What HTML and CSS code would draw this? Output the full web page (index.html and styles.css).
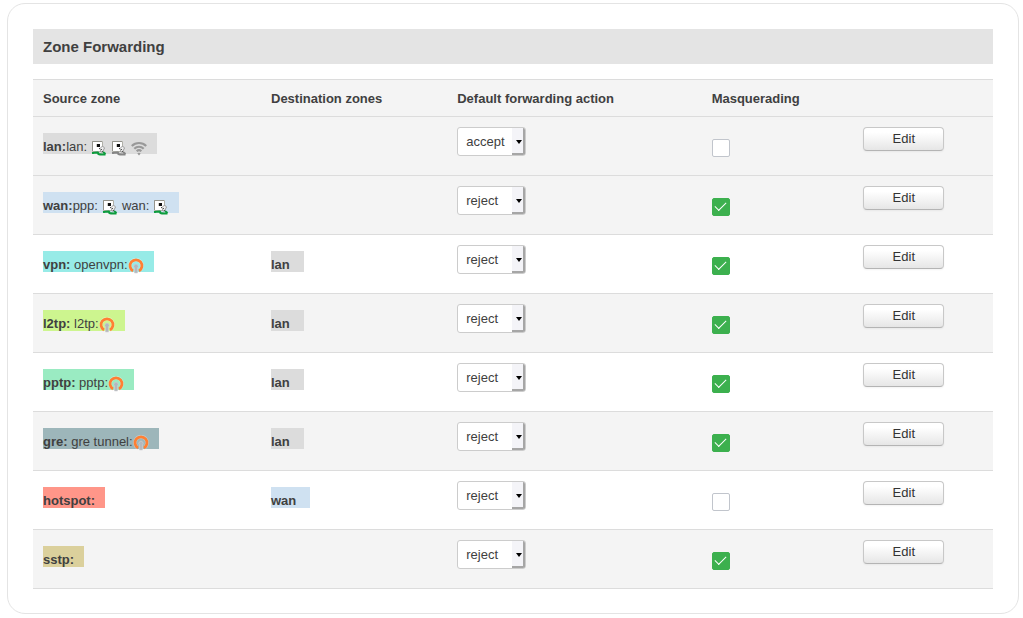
FILE: index.html
```html
<!DOCTYPE html>
<html lang="en">
<head>
<meta charset="utf-8">
<meta name="viewport" content="width=device-width, initial-scale=1">
<title>Zone Forwarding</title>
<link rel="stylesheet" href="styles.css">
</head>
<body>
<svg class="sprite" aria-hidden="true">
  <symbol id="port" viewBox="0 0 16 16">
    <path d="M1.500 1.500h10v10h-10z" fill="#fff" stroke="#b0b0a8"/>
    <path d="M1.500 11V1.500H11" fill="none" stroke="#94948c"/>
    <path d="M5 4h4v3H5z" fill="#d0d0c8"/>
    <path d="M6 4h3v3H6z" fill="#111"/>
    <path d="M1 13c2.500-.2 4-.6 6-.5 1 .6-.5 1 .5 1.500 1.500.8 4 .5 7 .5" fill="none" stroke="currentColor" stroke-width="2"/>
    <path d="M12 12l2.500 2" fill="none" stroke="currentColor" stroke-width="2"/>
    <path d="M9 8.500L11.500 6l2 2-2 4H10z" fill="#eee" stroke="#888" stroke-width=".8"/>
    <path d="M8 8h1v1H8zM10 9h1v1h-1zM11 11h1v1h-1z" fill="#555"/>
  </symbol>
  <symbol id="wifi" viewBox="0 0 16 16">
    <path d="M.8 6a10.200 10.200 0 0 1 14.400 0M3.300 8.700a6.700 6.700 0 0 1 9.400 0M5.700 11.300a3.300 3.300 0 0 1 4.600 0" fill="none" stroke="#999" stroke-width="2.200"/>
    <path d="M6.300 13.500q1.700-1.600 3.400 0L8 15.500z" fill="#999"/>
  </symbol>
  <symbol id="tunnel" viewBox="0 0 16 16">
    <path d="M4.600 12.700a6 6 0 1 1 6.800 0" fill="none" stroke="#fff" stroke-opacity=".3" stroke-width="3.800"/>
    <path d="M5 13a6 6 0 1 1 6 0" fill="none" stroke="#ff7f33" stroke-width="2.800"/>
    <path d="M6.500 15v-5a2.200 2.200 0 1 1 3 0v5z" fill="#b4b8be" stroke="#d0d0d4" stroke-width=".6"/>
  </symbol>
</svg>
<main class="panel">
  <h1 class="title">Zone Forwarding</h1>
  <table class="zones">
    <colgroup><col class="col-source"><col class="col-dest"><col class="col-action"><col class="col-masq"><col></colgroup>
    <thead>
      <tr><th scope="col">Source zone</th><th scope="col">Destination zones</th><th scope="col">Default forwarding action</th><th scope="col">Masquerading</th><td></td></tr>
    </thead>
    <tbody>
      <tr>
        <td class="zone-cell"><span class="zone gray"><span><b>lan:</b>lan:</span><svg class="icon gap on"><use href="#port"/></svg><svg class="icon gap off"><use href="#port"/></svg><svg class="icon gap"><use href="#wifi"/></svg></span></td>
        <td class="zone-cell"></td>
        <td><span class="picker"><select aria-label="lan forwarding action"><option>accept</option><option>reject</option></select></span></td>
        <td class="check-cell"><input type="checkbox" aria-label="lan masquerading"></td>
        <td><button type="button">Edit</button></td>
      </tr>
      <tr>
        <td class="zone-cell"><span class="zone blue"><span><b>wan:</b>ppp:</span><svg class="icon gap on"><use href="#port"/></svg><span class="gap">wan:</span><svg class="icon gap on"><use href="#port"/></svg></span></td>
        <td class="zone-cell"></td>
        <td><span class="picker"><select aria-label="wan forwarding action"><option>reject</option><option>accept</option></select></span></td>
        <td class="check-cell"><input type="checkbox" aria-label="wan masquerading" checked></td>
        <td><button type="button">Edit</button></td>
      </tr>
      <tr>
        <td class="zone-cell"><span class="zone cyan"><span><b>vpn:</b> openvpn:</span><svg class="icon"><use href="#tunnel"/></svg></span></td>
        <td class="zone-cell"><span class="zone gray wide"><b>lan</b></span></td>
        <td><span class="picker"><select aria-label="vpn forwarding action"><option>reject</option><option>accept</option></select></span></td>
        <td class="check-cell"><input type="checkbox" aria-label="vpn masquerading" checked></td>
        <td><button type="button">Edit</button></td>
      </tr>
      <tr>
        <td class="zone-cell"><span class="zone lime"><span><b>l2tp:</b> l2tp:</span><svg class="icon"><use href="#tunnel"/></svg></span></td>
        <td class="zone-cell"><span class="zone gray wide"><b>lan</b></span></td>
        <td><span class="picker"><select aria-label="l2tp forwarding action"><option>reject</option><option>accept</option></select></span></td>
        <td class="check-cell"><input type="checkbox" aria-label="l2tp masquerading" checked></td>
        <td><button type="button">Edit</button></td>
      </tr>
      <tr>
        <td class="zone-cell"><span class="zone mint"><span><b>pptp:</b> pptp:</span><svg class="icon"><use href="#tunnel"/></svg></span></td>
        <td class="zone-cell"><span class="zone gray wide"><b>lan</b></span></td>
        <td><span class="picker"><select aria-label="pptp forwarding action"><option>reject</option><option>accept</option></select></span></td>
        <td class="check-cell"><input type="checkbox" aria-label="pptp masquerading" checked></td>
        <td><button type="button">Edit</button></td>
      </tr>
      <tr>
        <td class="zone-cell"><span class="zone slate"><span><b>gre:</b> gre tunnel:</span><svg class="icon"><use href="#tunnel"/></svg></span></td>
        <td class="zone-cell"><span class="zone gray wide"><b>lan</b></span></td>
        <td><span class="picker"><select aria-label="gre forwarding action"><option>reject</option><option>accept</option></select></span></td>
        <td class="check-cell"><input type="checkbox" aria-label="gre masquerading" checked></td>
        <td><button type="button">Edit</button></td>
      </tr>
      <tr>
        <td class="zone-cell"><span class="zone red"><b>hotspot:</b></span></td>
        <td class="zone-cell"><span class="zone blue wide"><b>wan</b></span></td>
        <td><span class="picker"><select aria-label="hotspot forwarding action"><option>reject</option><option>accept</option></select></span></td>
        <td class="check-cell"><input type="checkbox" aria-label="hotspot masquerading"></td>
        <td><button type="button">Edit</button></td>
      </tr>
      <tr>
        <td class="zone-cell"><span class="zone sand"><b>sstp:</b></span></td>
        <td class="zone-cell"></td>
        <td><span class="picker"><select aria-label="sstp forwarding action"><option>reject</option><option>accept</option></select></span></td>
        <td class="check-cell"><input type="checkbox" aria-label="sstp masquerading" checked></td>
        <td><button type="button">Edit</button></td>
      </tr>
    </tbody>
  </table>
</main>
</body>
</html>
```
FILE: styles.css
```css
* { box-sizing: border-box; }
body {
  margin: 0;
  padding: 3px 4px 4px 7px;
  background: #fff;
  color: #404040;
  font: 13px/15px "Liberation Sans", Arial, sans-serif;
}
.sprite { display: none; }
.panel {
  padding: 25px 25px 24px;
  border: 1px solid #e4e4e4;
  border-radius: 18px;
}
.title {
  margin: 0 0 15px;
  padding: 9px 10px;
  background: #e4e4e4;
  font-size: 15px;
  line-height: 17px;
}
.zones {
  width: 100%;
  table-layout: fixed;
  border-collapse: separate;
  border-spacing: 0;
  border-top: 1px solid #dcdcdc;
}
.col-source { width: 23.75%; }
.col-dest { width: 19.4%; }
.col-action { width: 26.5%; }
.col-masq { width: 15.8%; }
th, td {
  padding: 10px 10px 0;
  border-bottom: 1px solid #dcdcdc;
  text-align: left;
  vertical-align: top;
}
thead { background: #f4f4f4; }
th { padding-top: 11px; padding-bottom: 10px; }
tbody tr:first-child, tbody tr:nth-child(even) { background: #f4f4f4; }
tbody td { height: 59px; }
.zone-cell { padding-top: 16px; }
.check-cell { padding-top: 22px; }
.zone {
  display: inline-flex;
  height: 21px;
  padding: 6px 10px 0 0;
  vertical-align: top;
  white-space: nowrap;
}
.wide { padding-right: 14px; }
.icon { width: 16px; height: 16px; flex: none; margin-top: 1px; }
.gap { margin-left: 4px; }
.on { color: #0c9c3c; }
.off { color: #858585; }
.gray { background: #dcdcdc; }
.blue { background: #cfe1f1; }
.cyan { background: #97ebe7; }
.lime { background: #cdf58f; }
.mint { background: #9aebc2; }
.slate { background: #9db6ba; }
.red { background: #ff9689; }
.sand { background: #dbd09c; }
.picker { display: inline-flex; position: relative; vertical-align: top; }
.picker::after {
  content: "";
  position: absolute;
  inset: 1px 1px 1px auto;
  width: 11px;
  border-right: 2px solid #a6a6a6;
  border-bottom: 2px solid #a6a6a6;
  border-radius: 0 2px 2px 0;
  background: #f4f4f8;
  pointer-events: none;
}
.picker::before {
  content: "";
  position: absolute;
  z-index: 1;
  top: 13px;
  right: 4px;
  border: 3px solid transparent;
  border-top: 4px solid #000;
  border-bottom: 0;
  pointer-events: none;
}
select {
  appearance: none;
  width: 69px;
  height: 29px;
  margin: 0;
  padding: 0 14px 0 8px;
  border: 1px solid #ccc;
  border-radius: 3px;
  background: #fff;
  color: #404040;
  font: inherit;
}
input {
  appearance: none;
  display: grid;
  place-items: center;
  width: 18px;
  height: 18px;
  margin: 0;
  border: 1px solid #c1c5cc;
  border-radius: 2px;
  background: #fff;
}
input:checked { border-color: #3cb04e; background: #3cb04e; }
input:checked::before {
  content: "";
  width: 10px;
  height: 5px;
  margin-bottom: 4px;
  border: solid #fff;
  border-width: 0 0 1px 1px;
  transform: rotate(-45deg);
}
button {
  display: block;
  width: 81px;
  height: 24px;
  padding: 0 0 2px;
  border: 1px solid #c8c8c8;
  border-bottom-color: #b4b4b4;
  border-radius: 4px;
  background: linear-gradient(#fff 20%, #e6e6e6);
  box-shadow: 0 1px 2px #0000000d;
  color: #333;
  font: inherit;
}
```
